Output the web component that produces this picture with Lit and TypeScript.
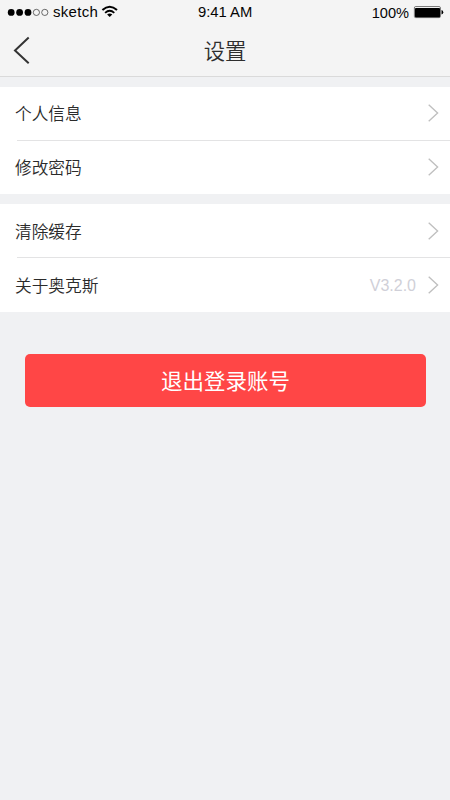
import { LitElement, html, css, svg } from "lit";
import { customElement, property } from "lit/decorators.js";

@customElement("status-bar")
class StatusBar extends LitElement {
  static styles = css`
    :host {
      display: flex;
      justify-content: space-between;
      height: 25px;
      color: #050505;
      font: 14.8px/25px "Liberation Sans", Arial, sans-serif;
      white-space: nowrap;
    }
    .left, .right { display: flex; flex: 1; }
    .left { padding-left: 7px; }
    .right { justify-content: flex-end; padding-right: 6px; }
    .carrier { margin-left: 4px; width: 46px; font-size: 15px; line-height: 24px; letter-spacing: 0.3px; }
    .time { width: 55px; }
    .level { margin-right: 4px; font-size: 14.6px; line-height: 26px; }
    svg { display: block; flex: none; }
  `;
  render() {
    return html`
      <div class="left">
        <svg width="42" height="25" viewBox="0 0 42 25">
          ${[0, 1, 2, 3, 4].map((i) =>
            i < 3
              ? svg`<circle cx=${4.2 + i * 8.4} cy="12.4" r="3.4" fill="#000"/>`
              : svg`<circle cx=${4.2 + i * 8.4} cy="12.4" r="3.1" fill="none" stroke="#222" stroke-width=".65"/>`
          )}
        </svg>
        <span class="carrier">sketch</span>
        <svg width="22" height="25" viewBox="0 0 22 25" fill="none" stroke="#000">
          <path d="M3.4 10.1Q10.7 3.5 18 10.1" stroke-width="2"/>
          <path d="M6.1 12.8Q10.7 8.7 15.3 12.8" stroke-width="1.8"/>
          <path d="M8.1 14.4Q10.7 12.4 13.3 14.4L10.7 16.9Z" fill="#000" stroke="none"/>
        </svg>
      </div>
      <span class="time">9:41 AM</span>
      <div class="right">
        <span class="level">100%</span>
        <svg width="31" height="25" viewBox="0 0 31 25">
          <rect x="1.4" y="6.6" width="26" height="11" rx="1.2" fill="#fff" stroke="#333" stroke-width=".7"/>
          <rect x="2" y="8" width="25" height="9.2" rx=".8" fill="#000"/>
          <path d="M28.5 10v4.6Q30.3 14.2 30.3 12.3T28.5 10Z" fill="#000"/>
        </svg>
      </div>
    `;
  }
}

@customElement("setting-row")
class SettingRow extends LitElement {
  @property() label = "";
  @property() value = "";
  static styles = css`
    :host {
      display: flex;
      box-sizing: border-box;
      align-items: center;
      height: 53px;
      padding: 0 11px 0 15px;
      color: #2b2b2b;
      font: 350 16.7px/24px "Noto Sans CJK SC", sans-serif;
    }
    .label { flex: 1; }
    .value {
      margin-right: 12px;
      padding-top: 2px;
      color: #d0d0d8;
      font: 16px/24px "Liberation Sans", Arial, sans-serif;
    }
    svg { display: block; }
  `;
  render() {
    return html`
      <span class="label">${this.label}</span>
      ${this.value ? html`<span class="value">${this.value}</span>` : ""}
      <svg width="11" height="18" viewBox="0 0 11 18" fill="none" stroke="#bfbfbf" stroke-width="1.35">
        <path d="M.7 .8L9.6 9L.7 17.2"/>
      </svg>
    `;
  }
}

@customElement("app-root")
class AppRoot extends LitElement {
  static styles = css`
    :host {
      display: flex;
      flex-direction: column;
      height: 800px;
      background: #f0f1f3;
      font-family: "Noto Sans CJK SC", sans-serif;
    }
    .header {
      height: 76px;
      background: #f4f4f4;
      border-bottom: 1px solid #dadada;
    }
    .nav {
      display: grid;
      grid-template-columns: 60px 1fr 60px;
      height: 50px;
      align-items: center;
    }
    .nav svg { display: block; margin-left: 13px; }
    .title {
      color: #2e2e2e;
      font-size: 21.3px;
      font-weight: 350;
      line-height: 48px;
      padding-bottom: 1px;
      text-align: center;
    }
    .group { margin-top: 10px; background: #fff; }
    .line { height: 1px; margin-left: 17px; background: #e3e3e4; }
    .raised { padding-bottom: 2px; }
    .last { height: 54px; }
    .logout {
      height: 53px;
      margin: 42px 24px 0 25px;
      padding: 0 0 2px;
      border: 0;
      border-radius: 5px;
      background: #ff4646;
      color: #fff;
      font: 400 21.5px/51px "Noto Sans CJK SC", sans-serif;
    }
  `;
  render() {
    return html`
      <div class="header">
        <status-bar></status-bar>
        <div class="nav">
          <svg width="18" height="28" viewBox="0 0 18 28" fill="none" stroke="#333" stroke-width="2">
            <path d="M15.7 1.6L2 14.4L15.7 27.2"/>
          </svg>
          <div class="title">设置</div>
        </div>
      </div>
      <div class="group">
        <setting-row class="raised" label="个人信息"></setting-row>
        <div class="line"></div>
        <setting-row class="raised" label="修改密码"></setting-row>
      </div>
      <div class="group">
        <setting-row label="清除缓存"></setting-row>
        <div class="line"></div>
        <setting-row class="last" label="关于奥克斯" value="V3.2.0"></setting-row>
      </div>
      <button class="logout">退出登录账号</button>
    `;
  }
}
